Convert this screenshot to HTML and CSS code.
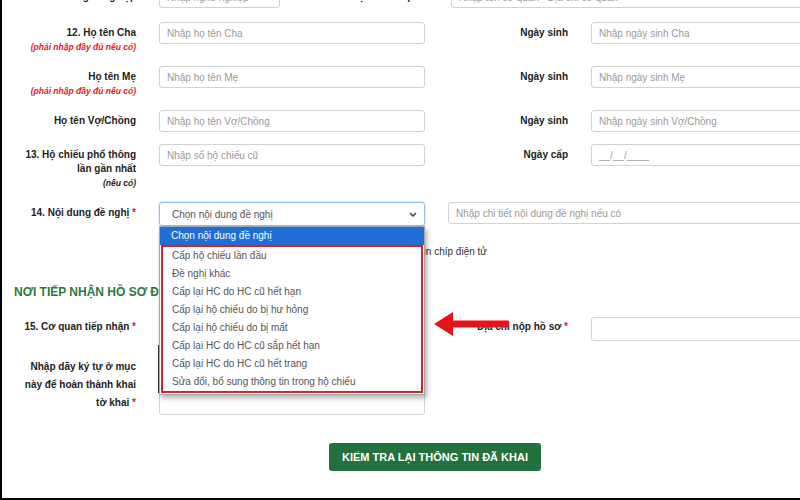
FILE: index.html
```html
<!DOCTYPE html>
<html lang="vi">
<head>
<meta charset="utf-8">
<title>Tờ khai hộ chiếu</title>
<link rel="stylesheet" href="styles.css">
</head>
<body>
<div class="page">
  <form class="form">
    <div class="row row-top">
      <div class="lbl">11. Nghề nghiệp</div>
      <input class="inp inp-short" placeholder="Nhập nghề nghiệp">
      <div class="lbl lbl-top">Tên và địa chỉ cơ quan</div>
      <input class="inp inp-wide" placeholder="Nhập tên cơ quan - Địa chỉ cơ quan">
    </div>

    <div class="row">
      <div class="lbl">12. Họ tên Cha<span class="hint">(phải nhập đầy đủ nếu có)</span></div>
      <input class="inp" placeholder="Nhập họ tên Cha">
      <div class="lbl">Ngày sinh</div>
      <input class="inp" placeholder="Nhập ngày sinh Cha">
    </div>

    <div class="row">
      <div class="lbl">Họ tên Mẹ<span class="hint">(phải nhập đầy đủ nếu có)</span></div>
      <input class="inp" placeholder="Nhập họ tên Mẹ">
      <div class="lbl">Ngày sinh</div>
      <input class="inp" placeholder="Nhập ngày sinh Mẹ">
    </div>

    <div class="row">
      <div class="lbl">Họ tên Vợ/Chồng</div>
      <input class="inp" placeholder="Nhập họ tên Vợ/Chồng">
      <div class="lbl">Ngày sinh</div>
      <input class="inp" placeholder="Nhập ngày sinh Vợ/Chồng">
    </div>

    <div class="row">
      <div class="lbl">13. Hộ chiếu phổ thông lần gần nhất<span class="hint hint-dark">(nếu có)</span></div>
      <input class="inp" placeholder="Nhập số hộ chiếu cũ">
      <div class="lbl">Ngày cấp</div>
      <input class="inp" placeholder="__/__/____">
    </div>

    <div class="row row-14">
      <div class="lbl">14. Nội dung đề nghị <span class="req">*</span></div>
      <div class="select-wrap">
        <div class="select">
          <span>Chọn nội dung đề nghị</span>
          <svg class="chev" width="8" height="5" viewBox="0 0 8 5"><path d="M1 1 L4 4 L7 1" fill="none" stroke="#444" stroke-width="1.5"/></svg>
        </div>
        <div class="dropdown">
          <div class="opt opt-active">Chọn nội dung đề nghị</div>
          <div class="marked">
            <div class="opt">Cấp hộ chiếu lần đầu</div>
            <div class="opt">Đề nghị khác</div>
            <div class="opt">Cấp lại HC do HC cũ hết hạn</div>
            <div class="opt">Cấp lại hộ chiếu do bị hư hỏng</div>
            <div class="opt">Cấp lại hộ chiếu do bị mất</div>
            <div class="opt">Cấp lại HC do HC cũ sắp hết hạn</div>
            <div class="opt">Cấp lại HC do HC cũ hết trang</div>
            <div class="opt">Sửa đổi, bổ sung thông tin trong hộ chiếu</div>
          </div>
        </div>
      </div>
      <input class="inp inp-detail" placeholder="Nhập chi tiết nội dung đề nghị nếu có">
    </div>

    <div class="row row-chip">
      <div class="chip-note">Đề nghị cấp hộ chiếu có gắn thông tin chíp điện tử</div>
    </div>

    <h3 class="section-title">NƠI TIẾP NHẬN HỒ SƠ ĐỀ NGHỊ</h3>

    <div class="row row-15">
      <div class="lbl lbl-15">15. Cơ quan tiếp nhận <span class="req">*</span></div>
      <div class="inp inp-select"></div>
      <div class="lbl lbl-15">Địa chỉ nộp hồ sơ <span class="req">*</span></div>
      <input class="inp inp-tall">
    </div>

    <div class="row row-captcha">
      <div class="lbl lbl-captcha">Nhập dãy ký tự ở mục này để hoàn thành khai tờ khai <span class="req">*</span></div>
      <div class="captcha">
        <div class="captcha-img"></div>
        <input class="inp">
      </div>
    </div>

    <div class="actions">
      <button type="button" class="btn">KIỂM TRA LẠI THÔNG TIN ĐÃ KHAI</button>
    </div>
  </form>

  <svg class="arrow" width="76" height="26" viewBox="0 0 76 26">
    <polygon points="0,13 19,1 19,25" fill="#e3141b"/>
    <rect x="17" y="9.5" width="58" height="7" rx="1" fill="#e3141b"/>
  </svg>
</div>
</body>
</html>
```

FILE: styles.css
```css
html, body {
  margin: 0;
  padding: 0;
  background: #fff;
}

.page {
  position: relative;
  width: 800px;
  height: 500px;
  box-sizing: border-box;
  border-left: 2px solid #000;
  border-bottom: 2px solid #000;
  overflow: hidden;
  font-family: "Liberation Sans", Arial, sans-serif;
  font-size: 10px;
  color: #222;
}

.form {
  margin: 0;
  width: 900px;
}

.row {
  display: grid;
  grid-template-columns: 134px 266px 120px 266px;
  column-gap: 23px;
  align-items: start;
  margin-bottom: 12px;
}

.row-top {
  grid-template-columns: 134px 121px 125px 400px;
  margin-top: -14px;
  margin-bottom: 14px;
}

.lbl {
  text-align: right;
  font-weight: bold;
  line-height: 14px;
  padding-top: 4px;
  padding-left: 14px;
  color: #222;
}

.lbl-top {
  padding-left: 0;
}

.hint {
  display: block;
  font-size: 8.5px;
  font-style: italic;
  color: #e0201f;
  line-height: 14px;
}

.hint-dark {
  color: #222;
}

.req {
  color: #e0201f;
}

.inp {
  box-sizing: border-box;
  height: 22px;
  width: 100%;
  margin: 0;
  padding: 0 7px;
  border: 1px solid #d2d2d2;
  border-radius: 3px;
  background: #fff;
  font-family: inherit;
  font-size: 10px;
  color: #333;
  outline: none;
}

.inp::placeholder {
  color: #9a9a9a;
}

.inp-wide {
  width: 400px;
}

.row-14 {
  margin-bottom: 18px;
}

.select-wrap {
  position: relative;
}

.select {
  box-sizing: border-box;
  height: 24px;
  display: flex;
  align-items: center;
  justify-content: space-between;
  padding: 0 7px 0 12px;
  border: 1px solid #8fc0ec;
  border-radius: 3px;
  box-shadow: 0 0 2px rgba(102, 175, 233, 0.6);
  color: #555;
}

.chev {
  display: block;
}

.dropdown {
  position: absolute;
  top: 24px;
  left: 0;
  width: 266px;
  box-sizing: border-box;
  z-index: 5;
  background: #fff;
  border: 1px solid #a5a5a5;
  padding-bottom: 1px;
  box-shadow: 2px 3px 5px rgba(0, 0, 0, 0.3);
}

.opt {
  height: 18px;
  line-height: 18px;
  padding-left: 11px;
  color: #555;
  white-space: nowrap;
}

.opt-active {
  background: #1e6ed6;
  color: #fff;
}

.marked {
  border: 2px solid #d7202a;
  margin: 0 1px;
}

.marked .opt {
  padding-left: 9px;
}

.inp-detail {
  grid-column: 3 / 5;
  width: 400px;
}

.row-chip {
  margin-bottom: 0;
}

.chip-note {
  grid-column: 2 / 4;
  text-align: right;
  padding-right: 81px;
  line-height: 16px;
  color: #333;
}

.section-title {
  margin: 24px 0 17px 12px;
  font-size: 12px;
  line-height: 16px;
  font-weight: bold;
  color: #2b7a3d;
}

.row-15 {
  margin-bottom: 4px;
}

.lbl-15 {
  padding-top: 3px;
}

.inp-select,
.inp-tall {
  height: 24px;
}

.lbl-captcha {
  line-height: 18px;
  padding-top: 13px;
}

.captcha {
  display: flex;
  flex-direction: column;
}

.captcha-img {
  height: 48px;
  border-left: 2px solid #333;
  margin-left: -1px;
}

.actions {
  display: flex;
  padding-left: 327px;
  margin-top: 28px;
}

.btn {
  height: 28px;
  width: 212px;
  padding: 0;
  border: none;
  border-radius: 3px;
  background: #22713f;
  color: #fff;
  font-family: inherit;
  font-size: 11px;
  font-weight: bold;
}

.arrow {
  position: absolute;
  left: 432px;
  top: 311px;
}
```
